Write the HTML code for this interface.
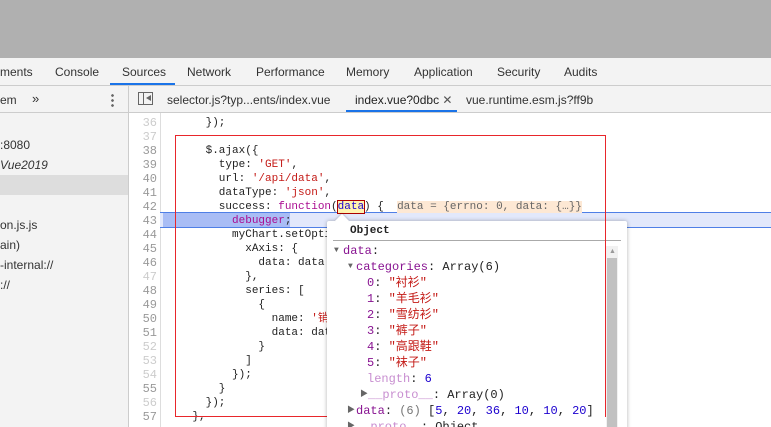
<!DOCTYPE html>
<html><head><meta charset="utf-8"><style>
*{margin:0;padding:0;box-sizing:border-box}
html,body{width:771px;height:427px;overflow:hidden}
body{position:relative;background:#fff;font-family:"Liberation Sans","Noto Sans CJK SC",sans-serif;font-size:12px;color:#333}
.a{position:absolute}
.mono{font-family:"Liberation Mono","Noto Sans CJK SC",monospace;font-size:11px}
.mono div{white-space:pre}
.ln{position:absolute;right:0;width:30px;text-align:right;color:#999}
.ln.f{color:#ccc}
.code div{height:14px;line-height:14px}
.pop div{height:16px;line-height:16px;position:relative}
.pop .tri{position:absolute;color:#666;font-size:8px;top:0}
.k{color:#aa0d91}.s{color:#c41a16}.v{color:#1c00cf}.p{color:#881391}
</style></head><body>
<div class="a" style="left:0;top:0;width:771px;height:58px;background:#b0b0b0"></div>
<div class="a" style="left:0;top:58px;width:771px;height:28px;background:#f3f3f3;border-bottom:1px solid #ccc"></div>
<div class="a" style="top:65px;left:0">ments</div>
<div class="a" style="top:65px;left:55px">Console</div>
<div class="a" style="top:65px;left:122px">Sources</div>
<div class="a" style="left:110px;top:83px;width:65px;height:2px;background:#1a73e8"></div>
<div class="a" style="top:65px;left:187px">Network</div>
<div class="a" style="top:65px;left:256px">Performance</div>
<div class="a" style="top:65px;left:346px">Memory</div>
<div class="a" style="top:65px;left:414px">Application</div>
<div class="a" style="top:65px;left:497px">Security</div>
<div class="a" style="top:65px;left:564px">Audits</div>
<div class="a" style="left:0;top:86px;width:771px;height:27px;background:#f3f3f3;border-bottom:1px solid #ccc"></div>
<div class="a" style="left:0;top:113px;width:128px;height:314px;background:#f3f3f3"></div>
<div class="a" style="left:128px;top:86px;width:1px;height:341px;background:#ccc"></div>
<div class="a" style="top:93px;left:0">em</div>
<div class="a" style="top:91px;left:32px;font-size:13px">»</div>
<div class="a" style="top:93px;left:111px;width:3px;height:14px;background:radial-gradient(circle,#666 1.2px,transparent 1.5px) 0 0/3px 5px"></div>
<div class="a" style="top:92px;left:138px;width:15px;height:13px;border:1px solid #666"></div>
<div class="a" style="top:92px;left:143px;width:1px;height:13px;background:#666"></div>
<div class="a" style="top:95px;left:146px;width:0;height:0;border-top:3.5px solid transparent;border-bottom:3.5px solid transparent;border-right:5px solid #666"></div>
<div class="a" style="top:93px;left:167px">selector.js?typ...ents/index.vue</div>
<div class="a" style="top:93px;left:355px;color:#222">index.vue?0dbc <span style="color:#555">✕</span></div>
<div class="a" style="left:346px;top:110px;width:111px;height:2px;background:#1a73e8"></div>
<div class="a" style="top:93px;left:466px">vue.runtime.esm.js?ff9b</div>
<div class="a" style="top:138px;left:0">:8080</div>
<div class="a" style="top:158px;left:0;font-style:italic">Vue2019</div>
<div class="a" style="left:0;top:175px;width:128px;height:20px;background:#ddd"></div>
<div class="a" style="top:218px;left:0">on.js.js</div>
<div class="a" style="top:238px;left:0">ain)</div>
<div class="a" style="top:258px;left:0">-internal://</div>
<div class="a" style="top:278px;left:0">://</div>
<div class="a" style="left:160px;top:113px;width:1px;height:314px;background:#ddd"></div>
<div class="a" style="left:160px;top:212px;width:611px;height:16px;background:#e2e8fb;border-top:1px solid #4f7fe6;border-bottom:1px solid #4f7fe6"></div>
<div class="a" style="left:163px;top:213px;width:127px;height:14px;background:#a9bdf5"></div>
<div class="a mono code" style="left:129px;top:116px;width:28px;font-size:12px"><div style="position:relative"><span class="ln f">36</span></div><div style="position:relative"><span class="ln f">37</span></div><div style="position:relative"><span class="ln">38</span></div><div style="position:relative"><span class="ln">39</span></div><div style="position:relative"><span class="ln">40</span></div><div style="position:relative"><span class="ln">41</span></div><div style="position:relative"><span class="ln">42</span></div><div style="position:relative"><span class="ln">43</span></div><div style="position:relative"><span class="ln">44</span></div><div style="position:relative"><span class="ln">45</span></div><div style="position:relative"><span class="ln">46</span></div><div style="position:relative"><span class="ln f">47</span></div><div style="position:relative"><span class="ln">48</span></div><div style="position:relative"><span class="ln">49</span></div><div style="position:relative"><span class="ln">50</span></div><div style="position:relative"><span class="ln">51</span></div><div style="position:relative"><span class="ln f">52</span></div><div style="position:relative"><span class="ln f">53</span></div><div style="position:relative"><span class="ln f">54</span></div><div style="position:relative"><span class="ln">55</span></div><div style="position:relative"><span class="ln f">56</span></div><div style="position:relative"><span class="ln">57</span></div></div>
<div class="a mono code" style="left:166px;top:116px;color:#222"><div>      });</div><div> </div><div>      $.ajax({</div><div>        type: <span class="s">'GET'</span>,</div><div>        url: <span class="s">'/api/data'</span>,</div><div>        dataType: <span class="s">'json'</span>,</div><div>        success: <span class="k">function</span>(<span style="outline:1px solid #a00;background:#fff3b0;color:#1c00cf">data</span>) {  <span style="background:#fde8d4;color:#666">data = {errno: 0, data: {…}}</span></div><div>          <span class="k">debugger</span>;</div><div>          myChart.setOpti</div><div>            xAxis: {</div><div>              data: data.</div><div>            },</div><div>            series: [</div><div>              {</div><div>                name: <span class="s">'销</span></div><div>                data: dat</div><div>              }</div><div>            ]</div><div>          });</div><div>        }</div><div>      });</div><div>    },</div></div>
<div class="a" style="left:175px;top:135px;width:431px;height:282px;border:1px solid #e8262b"></div>
<div class="a" style="left:327px;top:221px;width:300px;height:210px;background:#fff;box-shadow:0 0 4px rgba(0,0,0,.3);border-radius:2px"></div>
<div class="a" style="left:337px;top:216px;width:10px;height:10px;background:#fff;transform:rotate(45deg);box-shadow:-1px -1px 2px rgba(0,0,0,.15)"></div>
<div class="a" style="left:330px;top:222px;width:30px;height:8px;background:#fff"></div>
<div class="a" style="left:350px;top:225px;font-family:'Liberation Mono',monospace;font-weight:bold;font-size:11px;color:#222">Object</div>
<div class="a" style="left:333px;top:240px;width:288px;height:1px;background:#aaa"></div>
<div class="a" style="left:606px;top:246px;width:12px;height:181px;background:#f1f1f1"></div>
<div class="a" style="left:607px;top:258px;width:10px;height:169px;background:#c1c1c1"></div>
<div class="a" style="left:609px;top:248px;font-size:7px;color:#999">▲</div>
<div class="a" style="left:605px;top:135px;width:1px;height:282px;background:#e8262b"></div>
<div class="a mono pop" style="left:0;top:243px;width:600px;color:#222;font-size:12px">
<div style="padding-left:343px"><span class="tri" style="left:334px">▼</span><span class="p">data</span>:</div>
<div style="padding-left:356px"><span class="tri" style="left:348px">▼</span><span class="p">categories</span>: Array(6)</div>
<div style="padding-left:367px"><span class="p">0</span>: <span class="s">"衬衫"</span></div>
<div style="padding-left:367px"><span class="p">1</span>: <span class="s">"羊毛衫"</span></div>
<div style="padding-left:367px"><span class="p">2</span>: <span class="s">"雪纺衫"</span></div>
<div style="padding-left:367px"><span class="p">3</span>: <span class="s">"裤子"</span></div>
<div style="padding-left:367px"><span class="p">4</span>: <span class="s">"高跟鞋"</span></div>
<div style="padding-left:367px"><span class="p">5</span>: <span class="s">"袜子"</span></div>
<div style="padding-left:367px"><span style="color:#c88ed0">length</span>: <span class="v">6</span></div>
<div style="padding-left:368px"><span class="tri" style="left:360px">▶</span><span style="color:#c88ed0">__proto__</span>: Array(0)</div>
<div style="padding-left:356px"><span class="tri" style="left:347px">▶</span><span class="p">data</span>: <span style="color:#777">(6)</span> [<span class="v">5</span>, <span class="v">20</span>, <span class="v">36</span>, <span class="v">10</span>, <span class="v">10</span>, <span class="v">20</span>]</div>
<div style="padding-left:356px"><span class="tri" style="left:347px">▶</span><span style="color:#c88ed0">__proto__</span>: Object</div>
</div>
</body></html>
